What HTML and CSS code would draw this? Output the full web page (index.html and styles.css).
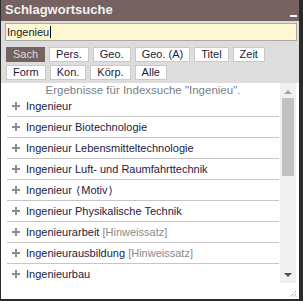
FILE: index.html
```html
<!DOCTYPE html>
<html lang="de">
<head>
<meta charset="utf-8">
<title>Schlagwortsuche</title>
<link rel="stylesheet" href="styles.css">
</head>
<body>
<div class="win">
  <div class="title">
    <span class="title-text">Schlagwortsuche</span>
    <span class="minimize"></span>
  </div>
  <div class="controls">
    <div class="field"><span class="field-text">Ingenieu</span><span class="caret"></span></div>
    <div class="btnrow">
      <span class="btn active">Sach</span>
      <span class="btn">Pers.</span>
      <span class="btn">Geo.</span>
      <span class="btn">Geo. (A)</span>
      <span class="btn">Titel</span>
      <span class="btn">Zeit</span>
    </div>
    <div class="btnrow">
      <span class="btn">Form</span>
      <span class="btn">Kon.</span>
      <span class="btn">Körp.</span>
      <span class="btn">Alle</span>
    </div>
  </div>
  <div class="results">
    <div class="list">
      <div class="info">Ergebnisse für Indexsuche "Ingenieu".</div>
      <div class="row"><span class="plus"></span><span class="label">Ingenieur</span></div>
      <div class="row"><span class="plus"></span><span class="label">Ingenieur Biotechnologie</span></div>
      <div class="row"><span class="plus"></span><span class="label">Ingenieur Lebensmitteltechnologie</span></div>
      <div class="row"><span class="plus"></span><span class="label">Ingenieur Luft- und Raumfahrttechnik</span></div>
      <div class="row"><span class="plus"></span><span class="label">Ingenieur <span class="br">⟨</span>Motiv<span class="br">⟩</span></span></div>
      <div class="row"><span class="plus"></span><span class="label">Ingenieur Physikalische Technik</span></div>
      <div class="row"><span class="plus"></span><span class="label">Ingenieurarbeit <span class="hint">[Hinweissatz]</span></span></div>
      <div class="row"><span class="plus"></span><span class="label">Ingenieurausbildung <span class="hint">[Hinweissatz]</span></span></div>
      <div class="row"><span class="plus"></span><span class="label">Ingenieurbau</span></div>
    </div>
    <div class="scrollbar">
      <span class="arrow up"></span>
      <span class="thumb"></span>
      <span class="track-rest"></span>
      <span class="arrow down"></span>
    </div>
  </div>
  <div class="footer">
    <svg class="grip" width="8" height="8" viewBox="0 0 8 8">
      <path d="M7 1 L1 7 M7 4 L4 7 M7 6.5 L6.5 7" stroke="#8a8a8a" stroke-width="1" stroke-dasharray="1 1"/>
    </svg>
  </div>
</div>
</body>
</html>
```

FILE: styles.css
```css
html, body {
  margin: 0;
  padding: 0;
}
body {
  background: #2a2a2a;
  font-family: "Liberation Sans", Arial, sans-serif;
  width: 303px;
  height: 301px;
  overflow: hidden;
}
.win {
  width: 300px;
  height: 300px;
  box-sizing: border-box;
  border: 1px solid #2b2b2b;
  border-top: 0;
  background: #ffffff;
  display: flex;
  flex-direction: column;
}
.title {
  height: 21px;
  background: #766260;
  display: flex;
  justify-content: space-between;
  align-items: flex-start;
  padding: 0 2px 0 4px;
}
.title-text {
  color: #f2f2f2;
  font-weight: bold;
  font-size: 13px;
  line-height: 20px;
}
.minimize {
  width: 7px;
  height: 2px;
  background: #ffffff;
  margin-top: 15px;
}
.controls {
  background: #dddddd;
  padding: 2px 2px 3px 4px;
  display: flex;
  flex-direction: column;
  gap: 3px;
}
.field {
  height: 18px;
  box-sizing: border-box;
  border: 1px solid #a9a9a9;
  background: #fff9d4;
  display: flex;
  align-items: center;
  padding-left: 1px;
  margin-bottom: 3px;
}
.field-text {
  font-size: 11px;
  color: #1a1a2e;
  line-height: 14px;
}
.caret {
  width: 1px;
  height: 12px;
  background: #000000;
  margin-left: 1px;
}
.btnrow {
  display: flex;
  gap: 4px;
  margin-left: 1px;
}
.btn {
  font-size: 11px;
  line-height: 13px;
  padding: 0 6px;
  border: 1px solid #c9c9c9;
  background: #ffffff;
  color: #1b1b38;
}
.btn.active {
  background: #766260;
  border-color: #766260;
  color: #dcdcdc;
}
.results {
  height: 200px;
  display: flex;
}
.list {
  width: 279px;
  box-sizing: border-box;
  padding: 0 1px 0 6px;
  overflow: hidden;
}
.info {
  font-size: 11.5px;
  line-height: 12px;
  padding-top: 1px;
  height: 13px;
  box-sizing: border-box;
  text-align: center;
  color: #7a7f88;
}
.row {
  height: 21px;
  box-sizing: border-box;
  border-bottom: 1px solid #c6c6c6;
  display: flex;
  align-items: center;
  padding-left: 5px;
  gap: 6px;
}
.plus {
  position: relative;
  width: 8px;
  height: 8px;
  flex: none;
}
.plus::before,
.plus::after {
  content: "";
  position: absolute;
  background: #8c8c8c;
}
.plus::before {
  left: 0;
  top: 3px;
  width: 8px;
  height: 2px;
}
.plus::after {
  left: 3px;
  top: 0;
  width: 2px;
  height: 8px;
}
.label {
  font-size: 11px;
  line-height: 20px;
  color: #1c1c3e;
  white-space: nowrap;
}
.br {
  font-family: "DejaVu Sans", sans-serif;
  font-size: 11px;
  padding: 0 1px;
}
.hint {
  color: #8a8a8a;
}
.scrollbar {
  width: 16px;
  background: #f0f0f0;
  display: flex;
  flex-direction: column;
  align-items: center;
}
.arrow {
  width: 0;
  height: 0;
  border-left: 4px solid transparent;
  border-right: 4px solid transparent;
  flex: none;
}
.arrow.up {
  border-bottom: 4px solid #a3a3a3;
  margin-top: 7px;
}
.arrow.down {
  border-top: 4px solid #505050;
  margin-bottom: 6px;
}
.thumb {
  width: 12px;
  height: 78px;
  background: #c1c1c1;
  margin-top: 4px;
  flex: none;
}
.track-rest {
  flex: 1;
}
.footer {
  flex: 1;
  display: flex;
  justify-content: flex-end;
  align-items: flex-end;
  padding: 0 2px 1px 0;
}
.grip {
  display: block;
}
```
